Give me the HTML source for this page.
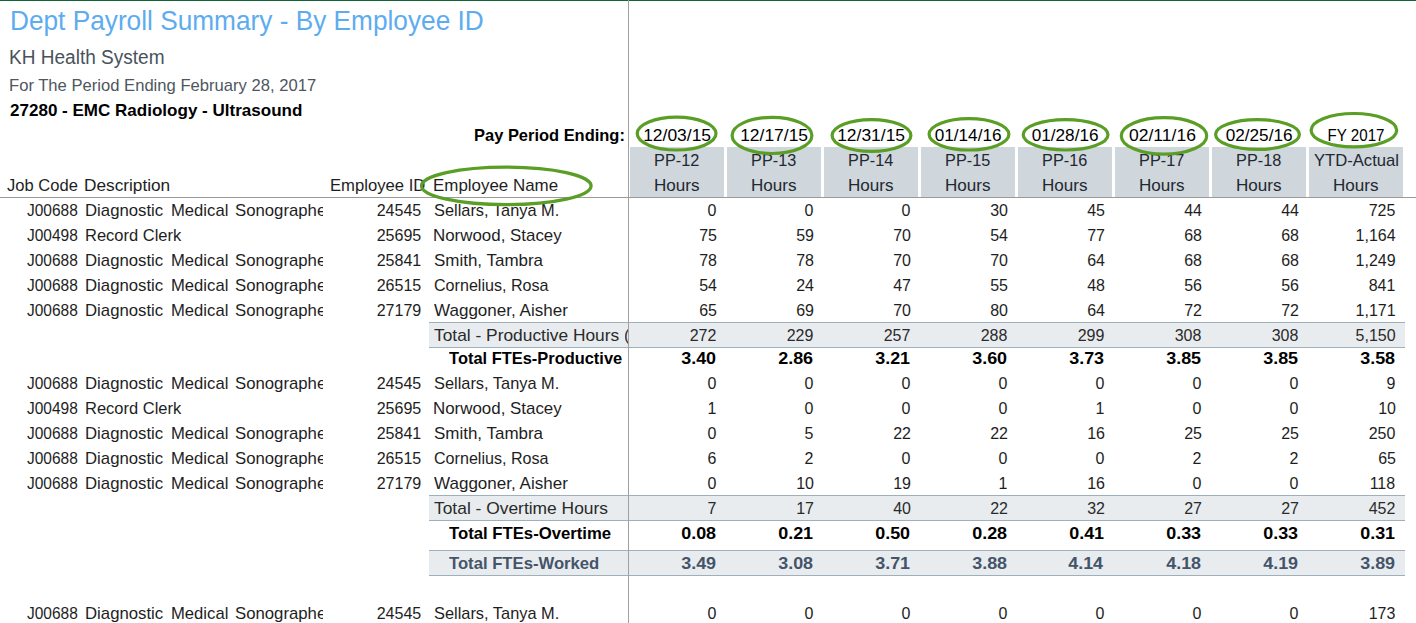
<!DOCTYPE html>
<html><head><meta charset="utf-8"><style>
html,body{margin:0;padding:0;background:#fff;}
body{width:1416px;height:623px;position:relative;overflow:hidden;font-family:"Liberation Sans",sans-serif;}
.t{position:absolute;white-space:nowrap;line-height:1;}
.s{display:inline-block;}
.b{position:absolute;}
</style></head><body>

<div class="b" style="left:0;top:0;width:1416px;height:1px;background:#0f6535"></div>
<div class="b" style="left:630px;top:147px;width:94px;height:50px;background:#cfd6dc"></div>
<div class="b" style="left:727px;top:147px;width:94px;height:50px;background:#cfd6dc"></div>
<div class="b" style="left:824px;top:147px;width:94px;height:50px;background:#cfd6dc"></div>
<div class="b" style="left:921px;top:147px;width:94px;height:50px;background:#cfd6dc"></div>
<div class="b" style="left:1018px;top:147px;width:94px;height:50px;background:#cfd6dc"></div>
<div class="b" style="left:1115px;top:147px;width:94px;height:50px;background:#cfd6dc"></div>
<div class="b" style="left:1212px;top:147px;width:94px;height:50px;background:#cfd6dc"></div>
<div class="b" style="left:1309px;top:147px;width:94px;height:50px;background:#cfd6dc"></div>
<div class="b" style="left:0;top:197px;width:1416px;height:1px;background:#9a9a9a"></div>
<div class="b" style="left:429px;top:322px;width:976px;height:24px;background:#e8ecef;border-top:1px solid #9fb0bd;border-bottom:1px solid #9fb0bd"></div>
<div class="b" style="left:429px;top:495px;width:976px;height:24px;background:#e8ecef;border-top:1px solid #9fb0bd;border-bottom:1px solid #9fb0bd"></div>
<div class="b" style="left:429px;top:550px;width:976px;height:24px;background:#e8ecef;border-top:1px solid #9fb0bd;border-bottom:1px solid #9fb0bd"></div>
<div class="t" style="top:6.72px;font-size:27.5px;color:#5eacf0;left:10.09px;"><span class="s" style="transform:scaleX(0.9538);transform-origin:left">Dept Payroll Summary - By Employee ID</span></div>
<div class="t" style="top:47.27px;font-size:20px;color:#48525c;left:9.05px;"><span class="s" style="transform:scaleX(0.9522);transform-origin:left">KH Health System</span></div>
<div class="t" style="top:76.91px;font-size:17px;color:#4e565e;left:9.02px;"><span class="s" style="transform:scaleX(0.9769);transform-origin:left">For The Period Ending February 28, 2017</span></div>
<div class="t" style="top:102.01px;font-size:17px;color:#000;font-weight:700;left:10.00px;"><span class="s" style="transform:scaleX(1.0017);transform-origin:left">27280 - EMC Radiology - Ultrasound</span></div>
<div class="t" style="top:126.61px;font-size:17px;color:#000;font-weight:700;left:468.78px;width:155.86px;"><span class="s" style="transform:scaleX(0.9676);transform-origin:right">Pay Period Ending:</span></div>
<div class="t" style="top:177.21px;font-size:17px;color:#1e1e1e;left:7.00px;"><span class="s" style="transform:scaleX(0.9735);transform-origin:left">Job Code</span></div>
<div class="t" style="top:177.21px;font-size:17px;color:#1e1e1e;left:84.49px;"><span class="s" style="transform:scaleX(1.0134);transform-origin:left">Description</span></div>
<div class="t" style="top:176.61px;font-size:17px;color:#1e1e1e;left:327.95px;width:97.32px;"><span class="s" style="transform:scaleX(0.9798);transform-origin:right">Employee ID</span></div>
<div class="t" style="top:176.61px;font-size:17px;color:#1e1e1e;left:432.70px;"><span class="s" style="transform:scaleX(0.9951);transform-origin:left">Employee Name</span></div>
<div class="t" style="top:126.61px;font-size:17px;color:#000;left:643.64px;"><span class="s" style="transform:scaleX(1.0260);transform-origin:33.36px 50%">12/03/15</span></div>
<div class="t" style="top:152.11px;font-size:17px;color:#222831;left:653.10px;"><span class="s" style="transform:scaleX(0.9565);transform-origin:23.90px 50%">PP-12</span></div>
<div class="t" style="top:177.01px;font-size:17px;color:#222831;left:654.08px;"><span class="s" style="transform:scaleX(1.0035);transform-origin:22.92px 50%">Hours</span></div>
<div class="t" style="top:126.61px;font-size:17px;color:#000;left:740.64px;"><span class="s" style="transform:scaleX(1.0260);transform-origin:33.36px 50%">12/17/15</span></div>
<div class="t" style="top:152.11px;font-size:17px;color:#222831;left:750.10px;"><span class="s" style="transform:scaleX(0.9565);transform-origin:23.90px 50%">PP-13</span></div>
<div class="t" style="top:177.01px;font-size:17px;color:#222831;left:751.08px;"><span class="s" style="transform:scaleX(1.0035);transform-origin:22.92px 50%">Hours</span></div>
<div class="t" style="top:126.61px;font-size:17px;color:#000;left:837.64px;"><span class="s" style="transform:scaleX(1.0260);transform-origin:33.36px 50%">12/31/15</span></div>
<div class="t" style="top:152.11px;font-size:17px;color:#222831;left:847.10px;"><span class="s" style="transform:scaleX(0.9565);transform-origin:23.90px 50%">PP-14</span></div>
<div class="t" style="top:177.01px;font-size:17px;color:#222831;left:848.08px;"><span class="s" style="transform:scaleX(1.0035);transform-origin:22.92px 50%">Hours</span></div>
<div class="t" style="top:126.61px;font-size:17px;color:#000;left:935.14px;"><span class="s" style="transform:scaleX(1.0104);transform-origin:32.86px 50%">01/14/16</span></div>
<div class="t" style="top:152.11px;font-size:17px;color:#222831;left:944.10px;"><span class="s" style="transform:scaleX(0.9565);transform-origin:23.90px 50%">PP-15</span></div>
<div class="t" style="top:177.01px;font-size:17px;color:#222831;left:945.08px;"><span class="s" style="transform:scaleX(1.0035);transform-origin:22.92px 50%">Hours</span></div>
<div class="t" style="top:126.61px;font-size:17px;color:#000;left:1032.14px;"><span class="s" style="transform:scaleX(1.0104);transform-origin:32.86px 50%">01/28/16</span></div>
<div class="t" style="top:152.11px;font-size:17px;color:#222831;left:1041.10px;"><span class="s" style="transform:scaleX(0.9565);transform-origin:23.90px 50%">PP-16</span></div>
<div class="t" style="top:177.01px;font-size:17px;color:#222831;left:1042.08px;"><span class="s" style="transform:scaleX(1.0035);transform-origin:22.92px 50%">Hours</span></div>
<div class="t" style="top:126.61px;font-size:17px;color:#000;left:1129.77px;"><span class="s" style="transform:scaleX(1.0301);transform-origin:32.23px 50%">02/11/16</span></div>
<div class="t" style="top:152.11px;font-size:17px;color:#222831;left:1138.10px;"><span class="s" style="transform:scaleX(0.9565);transform-origin:23.90px 50%">PP-17</span></div>
<div class="t" style="top:177.01px;font-size:17px;color:#222831;left:1139.08px;"><span class="s" style="transform:scaleX(1.0035);transform-origin:22.92px 50%">Hours</span></div>
<div class="t" style="top:126.61px;font-size:17px;color:#000;left:1226.14px;"><span class="s" style="transform:scaleX(1.0104);transform-origin:32.86px 50%">02/25/16</span></div>
<div class="t" style="top:152.11px;font-size:17px;color:#222831;left:1235.10px;"><span class="s" style="transform:scaleX(0.9565);transform-origin:23.90px 50%">PP-18</span></div>
<div class="t" style="top:177.01px;font-size:17px;color:#222831;left:1236.08px;"><span class="s" style="transform:scaleX(1.0035);transform-origin:22.92px 50%">Hours</span></div>
<div class="t" style="top:126.61px;font-size:17px;color:#000;left:1323.59px;"><span class="s" style="transform:scaleX(0.8884);transform-origin:32.41px 50%">FY 2017</span></div>
<div class="t" style="top:152.11px;font-size:17px;color:#222831;left:1312.93px;"><span class="s" style="transform:scaleX(0.9787);transform-origin:43.07px 50%">YTD-Actual</span></div>
<div class="t" style="top:177.01px;font-size:17px;color:#222831;left:1333.08px;"><span class="s" style="transform:scaleX(1.0035);transform-origin:22.92px 50%">Hours</span></div>
<div class="t" style="top:201.61px;font-size:17px;color:#1e1e1e;left:27.00px;"><span class="s" style="transform:scaleX(0.9111);transform-origin:left">J00688</span></div>
<div class="t" style="top:201.61px;font-size:17px;color:#1e1e1e;left:85.21px;"><span class="s" style="transform:scaleX(0.9851);transform-origin:left">Diagnostic</span></div>
<div class="t" style="top:201.61px;font-size:17px;color:#1e1e1e;left:170.82px;"><span class="s" style="transform:scaleX(0.9788);transform-origin:left">Medical</span></div>
<div class="t" style="top:201.61px;font-size:17px;color:#1e1e1e;left:235px;width:88px;overflow:hidden;"><span class="s" style="margin-left:0.00px;transform:scaleX(0.9850);transform-origin:left">Sonographer</span></div>
<div class="t" style="top:201.61px;font-size:17px;color:#1e1e1e;left:373.56px;width:47.27px;"><span class="s" style="transform:scaleX(0.9441);transform-origin:right">24545</span></div>
<div class="t" style="top:201.61px;font-size:17px;color:#1e1e1e;left:433.60px;"><span class="s" style="transform:scaleX(0.9633);transform-origin:left">Sellars, Tanya M.</span></div>
<div class="t" style="top:201.61px;font-size:17px;color:#1e1e1e;left:706.97px;width:9.45px;"><span class="s" style="transform:scaleX(0.9400);transform-origin:right">0</span></div>
<div class="t" style="top:201.61px;font-size:17px;color:#1e1e1e;left:803.97px;width:9.45px;"><span class="s" style="transform:scaleX(0.9400);transform-origin:right">0</span></div>
<div class="t" style="top:201.61px;font-size:17px;color:#1e1e1e;left:900.97px;width:9.45px;"><span class="s" style="transform:scaleX(0.9400);transform-origin:right">0</span></div>
<div class="t" style="top:201.61px;font-size:17px;color:#1e1e1e;left:988.52px;width:18.91px;"><span class="s" style="transform:scaleX(0.9400);transform-origin:right">30</span></div>
<div class="t" style="top:201.61px;font-size:17px;color:#1e1e1e;left:1085.52px;width:18.91px;"><span class="s" style="transform:scaleX(0.9400);transform-origin:right">45</span></div>
<div class="t" style="top:201.61px;font-size:17px;color:#1e1e1e;left:1182.52px;width:18.91px;"><span class="s" style="transform:scaleX(0.9400);transform-origin:right">44</span></div>
<div class="t" style="top:201.61px;font-size:17px;color:#1e1e1e;left:1279.52px;width:18.91px;"><span class="s" style="transform:scaleX(0.9400);transform-origin:right">44</span></div>
<div class="t" style="top:201.61px;font-size:17px;color:#1e1e1e;left:1367.06px;width:28.36px;"><span class="s" style="transform:scaleX(0.9400);transform-origin:right">725</span></div>
<div class="t" style="top:226.61px;font-size:17px;color:#1e1e1e;left:27.00px;"><span class="s" style="transform:scaleX(0.9111);transform-origin:left">J00498</span></div>
<div class="t" style="top:226.61px;font-size:17px;color:#1e1e1e;left:84.73px;"><span class="s" style="transform:scaleX(0.9707);transform-origin:left">Record Clerk</span></div>
<div class="t" style="top:226.61px;font-size:17px;color:#1e1e1e;left:373.56px;width:47.27px;"><span class="s" style="transform:scaleX(0.9441);transform-origin:right">25695</span></div>
<div class="t" style="top:226.61px;font-size:17px;color:#1e1e1e;left:432.61px;"><span class="s" style="transform:scaleX(0.9942);transform-origin:left">Norwood, Stacey</span></div>
<div class="t" style="top:226.61px;font-size:17px;color:#1e1e1e;left:697.52px;width:18.91px;"><span class="s" style="transform:scaleX(0.9400);transform-origin:right">75</span></div>
<div class="t" style="top:226.61px;font-size:17px;color:#1e1e1e;left:794.52px;width:18.91px;"><span class="s" style="transform:scaleX(0.9400);transform-origin:right">59</span></div>
<div class="t" style="top:226.61px;font-size:17px;color:#1e1e1e;left:891.52px;width:18.91px;"><span class="s" style="transform:scaleX(0.9400);transform-origin:right">70</span></div>
<div class="t" style="top:226.61px;font-size:17px;color:#1e1e1e;left:988.52px;width:18.91px;"><span class="s" style="transform:scaleX(0.9400);transform-origin:right">54</span></div>
<div class="t" style="top:226.61px;font-size:17px;color:#1e1e1e;left:1085.52px;width:18.91px;"><span class="s" style="transform:scaleX(0.9400);transform-origin:right">77</span></div>
<div class="t" style="top:226.61px;font-size:17px;color:#1e1e1e;left:1182.52px;width:18.91px;"><span class="s" style="transform:scaleX(0.9400);transform-origin:right">68</span></div>
<div class="t" style="top:226.61px;font-size:17px;color:#1e1e1e;left:1279.52px;width:18.91px;"><span class="s" style="transform:scaleX(0.9400);transform-origin:right">68</span></div>
<div class="t" style="top:226.61px;font-size:17px;color:#1e1e1e;left:1352.89px;width:42.54px;"><span class="s" style="transform:scaleX(0.9400);transform-origin:right">1,164</span></div>
<div class="t" style="top:251.61px;font-size:17px;color:#1e1e1e;left:27.00px;"><span class="s" style="transform:scaleX(0.9111);transform-origin:left">J00688</span></div>
<div class="t" style="top:251.61px;font-size:17px;color:#1e1e1e;left:85.21px;"><span class="s" style="transform:scaleX(0.9851);transform-origin:left">Diagnostic</span></div>
<div class="t" style="top:251.61px;font-size:17px;color:#1e1e1e;left:170.82px;"><span class="s" style="transform:scaleX(0.9788);transform-origin:left">Medical</span></div>
<div class="t" style="top:251.61px;font-size:17px;color:#1e1e1e;left:235px;width:88px;overflow:hidden;"><span class="s" style="margin-left:0.00px;transform:scaleX(0.9850);transform-origin:left">Sonographer</span></div>
<div class="t" style="top:251.61px;font-size:17px;color:#1e1e1e;left:373.56px;width:47.27px;"><span class="s" style="transform:scaleX(0.9441);transform-origin:right">25841</span></div>
<div class="t" style="top:251.61px;font-size:17px;color:#1e1e1e;left:433.60px;"><span class="s" style="transform:scaleX(0.9979);transform-origin:left">Smith, Tambra</span></div>
<div class="t" style="top:251.61px;font-size:17px;color:#1e1e1e;left:697.52px;width:18.91px;"><span class="s" style="transform:scaleX(0.9400);transform-origin:right">78</span></div>
<div class="t" style="top:251.61px;font-size:17px;color:#1e1e1e;left:794.52px;width:18.91px;"><span class="s" style="transform:scaleX(0.9400);transform-origin:right">78</span></div>
<div class="t" style="top:251.61px;font-size:17px;color:#1e1e1e;left:891.52px;width:18.91px;"><span class="s" style="transform:scaleX(0.9400);transform-origin:right">70</span></div>
<div class="t" style="top:251.61px;font-size:17px;color:#1e1e1e;left:988.52px;width:18.91px;"><span class="s" style="transform:scaleX(0.9400);transform-origin:right">70</span></div>
<div class="t" style="top:251.61px;font-size:17px;color:#1e1e1e;left:1085.52px;width:18.91px;"><span class="s" style="transform:scaleX(0.9400);transform-origin:right">64</span></div>
<div class="t" style="top:251.61px;font-size:17px;color:#1e1e1e;left:1182.52px;width:18.91px;"><span class="s" style="transform:scaleX(0.9400);transform-origin:right">68</span></div>
<div class="t" style="top:251.61px;font-size:17px;color:#1e1e1e;left:1279.52px;width:18.91px;"><span class="s" style="transform:scaleX(0.9400);transform-origin:right">68</span></div>
<div class="t" style="top:251.61px;font-size:17px;color:#1e1e1e;left:1352.89px;width:42.54px;"><span class="s" style="transform:scaleX(0.9400);transform-origin:right">1,249</span></div>
<div class="t" style="top:276.61px;font-size:17px;color:#1e1e1e;left:27.00px;"><span class="s" style="transform:scaleX(0.9111);transform-origin:left">J00688</span></div>
<div class="t" style="top:276.61px;font-size:17px;color:#1e1e1e;left:85.21px;"><span class="s" style="transform:scaleX(0.9851);transform-origin:left">Diagnostic</span></div>
<div class="t" style="top:276.61px;font-size:17px;color:#1e1e1e;left:170.82px;"><span class="s" style="transform:scaleX(0.9788);transform-origin:left">Medical</span></div>
<div class="t" style="top:276.61px;font-size:17px;color:#1e1e1e;left:235px;width:88px;overflow:hidden;"><span class="s" style="margin-left:0.00px;transform:scaleX(0.9850);transform-origin:left">Sonographer</span></div>
<div class="t" style="top:276.61px;font-size:17px;color:#1e1e1e;left:373.56px;width:47.27px;"><span class="s" style="transform:scaleX(0.9441);transform-origin:right">26515</span></div>
<div class="t" style="top:276.61px;font-size:17px;color:#1e1e1e;left:433.60px;"><span class="s" style="transform:scaleX(0.9466);transform-origin:left">Cornelius, Rosa</span></div>
<div class="t" style="top:276.61px;font-size:17px;color:#1e1e1e;left:697.52px;width:18.91px;"><span class="s" style="transform:scaleX(0.9400);transform-origin:right">54</span></div>
<div class="t" style="top:276.61px;font-size:17px;color:#1e1e1e;left:794.52px;width:18.91px;"><span class="s" style="transform:scaleX(0.9400);transform-origin:right">24</span></div>
<div class="t" style="top:276.61px;font-size:17px;color:#1e1e1e;left:891.52px;width:18.91px;"><span class="s" style="transform:scaleX(0.9400);transform-origin:right">47</span></div>
<div class="t" style="top:276.61px;font-size:17px;color:#1e1e1e;left:988.52px;width:18.91px;"><span class="s" style="transform:scaleX(0.9400);transform-origin:right">55</span></div>
<div class="t" style="top:276.61px;font-size:17px;color:#1e1e1e;left:1085.52px;width:18.91px;"><span class="s" style="transform:scaleX(0.9400);transform-origin:right">48</span></div>
<div class="t" style="top:276.61px;font-size:17px;color:#1e1e1e;left:1182.52px;width:18.91px;"><span class="s" style="transform:scaleX(0.9400);transform-origin:right">56</span></div>
<div class="t" style="top:276.61px;font-size:17px;color:#1e1e1e;left:1279.52px;width:18.91px;"><span class="s" style="transform:scaleX(0.9400);transform-origin:right">56</span></div>
<div class="t" style="top:276.61px;font-size:17px;color:#1e1e1e;left:1367.06px;width:28.36px;"><span class="s" style="transform:scaleX(0.9400);transform-origin:right">841</span></div>
<div class="t" style="top:301.61px;font-size:17px;color:#1e1e1e;left:27.00px;"><span class="s" style="transform:scaleX(0.9111);transform-origin:left">J00688</span></div>
<div class="t" style="top:301.61px;font-size:17px;color:#1e1e1e;left:85.21px;"><span class="s" style="transform:scaleX(0.9851);transform-origin:left">Diagnostic</span></div>
<div class="t" style="top:301.61px;font-size:17px;color:#1e1e1e;left:170.82px;"><span class="s" style="transform:scaleX(0.9788);transform-origin:left">Medical</span></div>
<div class="t" style="top:301.61px;font-size:17px;color:#1e1e1e;left:235px;width:88px;overflow:hidden;"><span class="s" style="margin-left:0.00px;transform:scaleX(0.9850);transform-origin:left">Sonographer</span></div>
<div class="t" style="top:301.61px;font-size:17px;color:#1e1e1e;left:373.56px;width:47.27px;"><span class="s" style="transform:scaleX(0.9441);transform-origin:right">27179</span></div>
<div class="t" style="top:301.61px;font-size:17px;color:#1e1e1e;left:433.60px;"><span class="s" style="transform:scaleX(1.0020);transform-origin:left">Waggoner, Aisher</span></div>
<div class="t" style="top:301.61px;font-size:17px;color:#1e1e1e;left:697.52px;width:18.91px;"><span class="s" style="transform:scaleX(0.9400);transform-origin:right">65</span></div>
<div class="t" style="top:301.61px;font-size:17px;color:#1e1e1e;left:794.52px;width:18.91px;"><span class="s" style="transform:scaleX(0.9400);transform-origin:right">69</span></div>
<div class="t" style="top:301.61px;font-size:17px;color:#1e1e1e;left:891.52px;width:18.91px;"><span class="s" style="transform:scaleX(0.9400);transform-origin:right">70</span></div>
<div class="t" style="top:301.61px;font-size:17px;color:#1e1e1e;left:988.52px;width:18.91px;"><span class="s" style="transform:scaleX(0.9400);transform-origin:right">80</span></div>
<div class="t" style="top:301.61px;font-size:17px;color:#1e1e1e;left:1085.52px;width:18.91px;"><span class="s" style="transform:scaleX(0.9400);transform-origin:right">64</span></div>
<div class="t" style="top:301.61px;font-size:17px;color:#1e1e1e;left:1182.52px;width:18.91px;"><span class="s" style="transform:scaleX(0.9400);transform-origin:right">72</span></div>
<div class="t" style="top:301.61px;font-size:17px;color:#1e1e1e;left:1279.52px;width:18.91px;"><span class="s" style="transform:scaleX(0.9400);transform-origin:right">72</span></div>
<div class="t" style="top:301.61px;font-size:17px;color:#1e1e1e;left:1352.89px;width:42.54px;"><span class="s" style="transform:scaleX(0.9400);transform-origin:right">1,171</span></div>
<div class="t" style="top:326.91px;font-size:17px;color:#2a2a2a;left:433.70px;"><span class="s" style="transform:scaleX(1.0210);transform-origin:left">Total - Productive Hours</span></div>
<div class="t" style="top:326.91px;font-size:17px;color:#2a2a2a;left:624.7px;width:3.2999999999999545px;overflow:hidden;"><span class="s" style="margin-left:-0.97px;transform:scaleX(0.9700);transform-origin:left">(R</span></div>
<div class="t" style="top:326.91px;font-size:17px;color:#2a2a2a;left:688.06px;width:28.36px;"><span class="s" style="transform:scaleX(0.9400);transform-origin:right">272</span></div>
<div class="t" style="top:326.91px;font-size:17px;color:#2a2a2a;left:785.06px;width:28.36px;"><span class="s" style="transform:scaleX(0.9400);transform-origin:right">229</span></div>
<div class="t" style="top:326.91px;font-size:17px;color:#2a2a2a;left:882.06px;width:28.36px;"><span class="s" style="transform:scaleX(0.9400);transform-origin:right">257</span></div>
<div class="t" style="top:326.91px;font-size:17px;color:#2a2a2a;left:979.06px;width:28.36px;"><span class="s" style="transform:scaleX(0.9400);transform-origin:right">288</span></div>
<div class="t" style="top:326.91px;font-size:17px;color:#2a2a2a;left:1076.06px;width:28.36px;"><span class="s" style="transform:scaleX(0.9400);transform-origin:right">299</span></div>
<div class="t" style="top:326.91px;font-size:17px;color:#2a2a2a;left:1173.06px;width:28.36px;"><span class="s" style="transform:scaleX(0.9400);transform-origin:right">308</span></div>
<div class="t" style="top:326.91px;font-size:17px;color:#2a2a2a;left:1270.06px;width:28.36px;"><span class="s" style="transform:scaleX(0.9400);transform-origin:right">308</span></div>
<div class="t" style="top:326.91px;font-size:17px;color:#2a2a2a;left:1352.89px;width:42.54px;"><span class="s" style="transform:scaleX(0.9400);transform-origin:right">5,150</span></div>
<div class="t" style="top:349.71px;font-size:17px;color:#000;font-weight:700;left:443.19px;width:179.15px;"><span class="s" style="transform:scaleX(0.9659);transform-origin:right">Total FTEs-Productive</span></div>
<div class="t" style="top:349.71px;font-size:17px;color:#000;font-weight:700;left:683.39px;width:33.09px;"><span class="s" style="transform:scaleX(1.0550);transform-origin:right">3.40</span></div>
<div class="t" style="top:349.71px;font-size:17px;color:#000;font-weight:700;left:780.39px;width:33.09px;"><span class="s" style="transform:scaleX(1.0550);transform-origin:right">2.86</span></div>
<div class="t" style="top:349.71px;font-size:17px;color:#000;font-weight:700;left:877.39px;width:33.09px;"><span class="s" style="transform:scaleX(1.0550);transform-origin:right">3.21</span></div>
<div class="t" style="top:349.71px;font-size:17px;color:#000;font-weight:700;left:974.39px;width:33.09px;"><span class="s" style="transform:scaleX(1.0550);transform-origin:right">3.60</span></div>
<div class="t" style="top:349.71px;font-size:17px;color:#000;font-weight:700;left:1071.39px;width:33.09px;"><span class="s" style="transform:scaleX(1.0550);transform-origin:right">3.73</span></div>
<div class="t" style="top:349.71px;font-size:17px;color:#000;font-weight:700;left:1168.39px;width:33.09px;"><span class="s" style="transform:scaleX(1.0550);transform-origin:right">3.85</span></div>
<div class="t" style="top:349.71px;font-size:17px;color:#000;font-weight:700;left:1265.39px;width:33.09px;"><span class="s" style="transform:scaleX(1.0550);transform-origin:right">3.85</span></div>
<div class="t" style="top:349.71px;font-size:17px;color:#000;font-weight:700;left:1362.39px;width:33.09px;"><span class="s" style="transform:scaleX(1.0550);transform-origin:right">3.58</span></div>
<div class="t" style="top:374.61px;font-size:17px;color:#1e1e1e;left:27.00px;"><span class="s" style="transform:scaleX(0.9111);transform-origin:left">J00688</span></div>
<div class="t" style="top:374.61px;font-size:17px;color:#1e1e1e;left:85.21px;"><span class="s" style="transform:scaleX(0.9851);transform-origin:left">Diagnostic</span></div>
<div class="t" style="top:374.61px;font-size:17px;color:#1e1e1e;left:170.82px;"><span class="s" style="transform:scaleX(0.9788);transform-origin:left">Medical</span></div>
<div class="t" style="top:374.61px;font-size:17px;color:#1e1e1e;left:235px;width:88px;overflow:hidden;"><span class="s" style="margin-left:0.00px;transform:scaleX(0.9850);transform-origin:left">Sonographer</span></div>
<div class="t" style="top:374.61px;font-size:17px;color:#1e1e1e;left:373.56px;width:47.27px;"><span class="s" style="transform:scaleX(0.9441);transform-origin:right">24545</span></div>
<div class="t" style="top:374.61px;font-size:17px;color:#1e1e1e;left:433.60px;"><span class="s" style="transform:scaleX(0.9633);transform-origin:left">Sellars, Tanya M.</span></div>
<div class="t" style="top:374.61px;font-size:17px;color:#1e1e1e;left:706.97px;width:9.45px;"><span class="s" style="transform:scaleX(0.9400);transform-origin:right">0</span></div>
<div class="t" style="top:374.61px;font-size:17px;color:#1e1e1e;left:803.97px;width:9.45px;"><span class="s" style="transform:scaleX(0.9400);transform-origin:right">0</span></div>
<div class="t" style="top:374.61px;font-size:17px;color:#1e1e1e;left:900.97px;width:9.45px;"><span class="s" style="transform:scaleX(0.9400);transform-origin:right">0</span></div>
<div class="t" style="top:374.61px;font-size:17px;color:#1e1e1e;left:997.97px;width:9.45px;"><span class="s" style="transform:scaleX(0.9400);transform-origin:right">0</span></div>
<div class="t" style="top:374.61px;font-size:17px;color:#1e1e1e;left:1094.97px;width:9.45px;"><span class="s" style="transform:scaleX(0.9400);transform-origin:right">0</span></div>
<div class="t" style="top:374.61px;font-size:17px;color:#1e1e1e;left:1191.97px;width:9.45px;"><span class="s" style="transform:scaleX(0.9400);transform-origin:right">0</span></div>
<div class="t" style="top:374.61px;font-size:17px;color:#1e1e1e;left:1288.97px;width:9.45px;"><span class="s" style="transform:scaleX(0.9400);transform-origin:right">0</span></div>
<div class="t" style="top:374.61px;font-size:17px;color:#1e1e1e;left:1385.97px;width:9.45px;"><span class="s" style="transform:scaleX(0.9400);transform-origin:right">9</span></div>
<div class="t" style="top:399.61px;font-size:17px;color:#1e1e1e;left:27.00px;"><span class="s" style="transform:scaleX(0.9111);transform-origin:left">J00498</span></div>
<div class="t" style="top:399.61px;font-size:17px;color:#1e1e1e;left:84.73px;"><span class="s" style="transform:scaleX(0.9707);transform-origin:left">Record Clerk</span></div>
<div class="t" style="top:399.61px;font-size:17px;color:#1e1e1e;left:373.56px;width:47.27px;"><span class="s" style="transform:scaleX(0.9441);transform-origin:right">25695</span></div>
<div class="t" style="top:399.61px;font-size:17px;color:#1e1e1e;left:432.61px;"><span class="s" style="transform:scaleX(0.9942);transform-origin:left">Norwood, Stacey</span></div>
<div class="t" style="top:399.61px;font-size:17px;color:#1e1e1e;left:706.97px;width:9.45px;"><span class="s" style="transform:scaleX(0.9400);transform-origin:right">1</span></div>
<div class="t" style="top:399.61px;font-size:17px;color:#1e1e1e;left:803.97px;width:9.45px;"><span class="s" style="transform:scaleX(0.9400);transform-origin:right">0</span></div>
<div class="t" style="top:399.61px;font-size:17px;color:#1e1e1e;left:900.97px;width:9.45px;"><span class="s" style="transform:scaleX(0.9400);transform-origin:right">0</span></div>
<div class="t" style="top:399.61px;font-size:17px;color:#1e1e1e;left:997.97px;width:9.45px;"><span class="s" style="transform:scaleX(0.9400);transform-origin:right">0</span></div>
<div class="t" style="top:399.61px;font-size:17px;color:#1e1e1e;left:1094.97px;width:9.45px;"><span class="s" style="transform:scaleX(0.9400);transform-origin:right">1</span></div>
<div class="t" style="top:399.61px;font-size:17px;color:#1e1e1e;left:1191.97px;width:9.45px;"><span class="s" style="transform:scaleX(0.9400);transform-origin:right">0</span></div>
<div class="t" style="top:399.61px;font-size:17px;color:#1e1e1e;left:1288.97px;width:9.45px;"><span class="s" style="transform:scaleX(0.9400);transform-origin:right">0</span></div>
<div class="t" style="top:399.61px;font-size:17px;color:#1e1e1e;left:1376.52px;width:18.91px;"><span class="s" style="transform:scaleX(0.9400);transform-origin:right">10</span></div>
<div class="t" style="top:424.61px;font-size:17px;color:#1e1e1e;left:27.00px;"><span class="s" style="transform:scaleX(0.9111);transform-origin:left">J00688</span></div>
<div class="t" style="top:424.61px;font-size:17px;color:#1e1e1e;left:85.21px;"><span class="s" style="transform:scaleX(0.9851);transform-origin:left">Diagnostic</span></div>
<div class="t" style="top:424.61px;font-size:17px;color:#1e1e1e;left:170.82px;"><span class="s" style="transform:scaleX(0.9788);transform-origin:left">Medical</span></div>
<div class="t" style="top:424.61px;font-size:17px;color:#1e1e1e;left:235px;width:88px;overflow:hidden;"><span class="s" style="margin-left:0.00px;transform:scaleX(0.9850);transform-origin:left">Sonographer</span></div>
<div class="t" style="top:424.61px;font-size:17px;color:#1e1e1e;left:373.56px;width:47.27px;"><span class="s" style="transform:scaleX(0.9441);transform-origin:right">25841</span></div>
<div class="t" style="top:424.61px;font-size:17px;color:#1e1e1e;left:433.60px;"><span class="s" style="transform:scaleX(0.9979);transform-origin:left">Smith, Tambra</span></div>
<div class="t" style="top:424.61px;font-size:17px;color:#1e1e1e;left:706.97px;width:9.45px;"><span class="s" style="transform:scaleX(0.9400);transform-origin:right">0</span></div>
<div class="t" style="top:424.61px;font-size:17px;color:#1e1e1e;left:803.97px;width:9.45px;"><span class="s" style="transform:scaleX(0.9400);transform-origin:right">5</span></div>
<div class="t" style="top:424.61px;font-size:17px;color:#1e1e1e;left:891.52px;width:18.91px;"><span class="s" style="transform:scaleX(0.9400);transform-origin:right">22</span></div>
<div class="t" style="top:424.61px;font-size:17px;color:#1e1e1e;left:988.52px;width:18.91px;"><span class="s" style="transform:scaleX(0.9400);transform-origin:right">22</span></div>
<div class="t" style="top:424.61px;font-size:17px;color:#1e1e1e;left:1085.52px;width:18.91px;"><span class="s" style="transform:scaleX(0.9400);transform-origin:right">16</span></div>
<div class="t" style="top:424.61px;font-size:17px;color:#1e1e1e;left:1182.52px;width:18.91px;"><span class="s" style="transform:scaleX(0.9400);transform-origin:right">25</span></div>
<div class="t" style="top:424.61px;font-size:17px;color:#1e1e1e;left:1279.52px;width:18.91px;"><span class="s" style="transform:scaleX(0.9400);transform-origin:right">25</span></div>
<div class="t" style="top:424.61px;font-size:17px;color:#1e1e1e;left:1367.06px;width:28.36px;"><span class="s" style="transform:scaleX(0.9400);transform-origin:right">250</span></div>
<div class="t" style="top:449.61px;font-size:17px;color:#1e1e1e;left:27.00px;"><span class="s" style="transform:scaleX(0.9111);transform-origin:left">J00688</span></div>
<div class="t" style="top:449.61px;font-size:17px;color:#1e1e1e;left:85.21px;"><span class="s" style="transform:scaleX(0.9851);transform-origin:left">Diagnostic</span></div>
<div class="t" style="top:449.61px;font-size:17px;color:#1e1e1e;left:170.82px;"><span class="s" style="transform:scaleX(0.9788);transform-origin:left">Medical</span></div>
<div class="t" style="top:449.61px;font-size:17px;color:#1e1e1e;left:235px;width:88px;overflow:hidden;"><span class="s" style="margin-left:0.00px;transform:scaleX(0.9850);transform-origin:left">Sonographer</span></div>
<div class="t" style="top:449.61px;font-size:17px;color:#1e1e1e;left:373.56px;width:47.27px;"><span class="s" style="transform:scaleX(0.9441);transform-origin:right">26515</span></div>
<div class="t" style="top:449.61px;font-size:17px;color:#1e1e1e;left:433.60px;"><span class="s" style="transform:scaleX(0.9466);transform-origin:left">Cornelius, Rosa</span></div>
<div class="t" style="top:449.61px;font-size:17px;color:#1e1e1e;left:706.97px;width:9.45px;"><span class="s" style="transform:scaleX(0.9400);transform-origin:right">6</span></div>
<div class="t" style="top:449.61px;font-size:17px;color:#1e1e1e;left:803.97px;width:9.45px;"><span class="s" style="transform:scaleX(0.9400);transform-origin:right">2</span></div>
<div class="t" style="top:449.61px;font-size:17px;color:#1e1e1e;left:900.97px;width:9.45px;"><span class="s" style="transform:scaleX(0.9400);transform-origin:right">0</span></div>
<div class="t" style="top:449.61px;font-size:17px;color:#1e1e1e;left:997.97px;width:9.45px;"><span class="s" style="transform:scaleX(0.9400);transform-origin:right">0</span></div>
<div class="t" style="top:449.61px;font-size:17px;color:#1e1e1e;left:1094.97px;width:9.45px;"><span class="s" style="transform:scaleX(0.9400);transform-origin:right">0</span></div>
<div class="t" style="top:449.61px;font-size:17px;color:#1e1e1e;left:1191.97px;width:9.45px;"><span class="s" style="transform:scaleX(0.9400);transform-origin:right">2</span></div>
<div class="t" style="top:449.61px;font-size:17px;color:#1e1e1e;left:1288.97px;width:9.45px;"><span class="s" style="transform:scaleX(0.9400);transform-origin:right">2</span></div>
<div class="t" style="top:449.61px;font-size:17px;color:#1e1e1e;left:1376.52px;width:18.91px;"><span class="s" style="transform:scaleX(0.9400);transform-origin:right">65</span></div>
<div class="t" style="top:474.61px;font-size:17px;color:#1e1e1e;left:27.00px;"><span class="s" style="transform:scaleX(0.9111);transform-origin:left">J00688</span></div>
<div class="t" style="top:474.61px;font-size:17px;color:#1e1e1e;left:85.21px;"><span class="s" style="transform:scaleX(0.9851);transform-origin:left">Diagnostic</span></div>
<div class="t" style="top:474.61px;font-size:17px;color:#1e1e1e;left:170.82px;"><span class="s" style="transform:scaleX(0.9788);transform-origin:left">Medical</span></div>
<div class="t" style="top:474.61px;font-size:17px;color:#1e1e1e;left:235px;width:88px;overflow:hidden;"><span class="s" style="margin-left:0.00px;transform:scaleX(0.9850);transform-origin:left">Sonographer</span></div>
<div class="t" style="top:474.61px;font-size:17px;color:#1e1e1e;left:373.56px;width:47.27px;"><span class="s" style="transform:scaleX(0.9441);transform-origin:right">27179</span></div>
<div class="t" style="top:474.61px;font-size:17px;color:#1e1e1e;left:433.60px;"><span class="s" style="transform:scaleX(1.0020);transform-origin:left">Waggoner, Aisher</span></div>
<div class="t" style="top:474.61px;font-size:17px;color:#1e1e1e;left:706.97px;width:9.45px;"><span class="s" style="transform:scaleX(0.9400);transform-origin:right">0</span></div>
<div class="t" style="top:474.61px;font-size:17px;color:#1e1e1e;left:794.52px;width:18.91px;"><span class="s" style="transform:scaleX(0.9400);transform-origin:right">10</span></div>
<div class="t" style="top:474.61px;font-size:17px;color:#1e1e1e;left:891.52px;width:18.91px;"><span class="s" style="transform:scaleX(0.9400);transform-origin:right">19</span></div>
<div class="t" style="top:474.61px;font-size:17px;color:#1e1e1e;left:997.97px;width:9.45px;"><span class="s" style="transform:scaleX(0.9400);transform-origin:right">1</span></div>
<div class="t" style="top:474.61px;font-size:17px;color:#1e1e1e;left:1085.52px;width:18.91px;"><span class="s" style="transform:scaleX(0.9400);transform-origin:right">16</span></div>
<div class="t" style="top:474.61px;font-size:17px;color:#1e1e1e;left:1191.97px;width:9.45px;"><span class="s" style="transform:scaleX(0.9400);transform-origin:right">0</span></div>
<div class="t" style="top:474.61px;font-size:17px;color:#1e1e1e;left:1288.97px;width:9.45px;"><span class="s" style="transform:scaleX(0.9400);transform-origin:right">0</span></div>
<div class="t" style="top:474.61px;font-size:17px;color:#1e1e1e;left:1368.33px;width:27.10px;"><span class="s" style="transform:scaleX(0.9400);transform-origin:right">118</span></div>
<div class="t" style="top:499.81px;font-size:17px;color:#2a2a2a;left:433.80px;"><span class="s" style="transform:scaleX(1.0233);transform-origin:left">Total - Overtime Hours</span></div>
<div class="t" style="top:499.81px;font-size:17px;color:#2a2a2a;left:706.97px;width:9.45px;"><span class="s" style="transform:scaleX(0.9400);transform-origin:right">7</span></div>
<div class="t" style="top:499.81px;font-size:17px;color:#2a2a2a;left:794.52px;width:18.91px;"><span class="s" style="transform:scaleX(0.9400);transform-origin:right">17</span></div>
<div class="t" style="top:499.81px;font-size:17px;color:#2a2a2a;left:891.52px;width:18.91px;"><span class="s" style="transform:scaleX(0.9400);transform-origin:right">40</span></div>
<div class="t" style="top:499.81px;font-size:17px;color:#2a2a2a;left:988.52px;width:18.91px;"><span class="s" style="transform:scaleX(0.9400);transform-origin:right">22</span></div>
<div class="t" style="top:499.81px;font-size:17px;color:#2a2a2a;left:1085.52px;width:18.91px;"><span class="s" style="transform:scaleX(0.9400);transform-origin:right">32</span></div>
<div class="t" style="top:499.81px;font-size:17px;color:#2a2a2a;left:1182.52px;width:18.91px;"><span class="s" style="transform:scaleX(0.9400);transform-origin:right">27</span></div>
<div class="t" style="top:499.81px;font-size:17px;color:#2a2a2a;left:1279.52px;width:18.91px;"><span class="s" style="transform:scaleX(0.9400);transform-origin:right">27</span></div>
<div class="t" style="top:499.81px;font-size:17px;color:#2a2a2a;left:1367.06px;width:28.36px;"><span class="s" style="transform:scaleX(0.9400);transform-origin:right">452</span></div>
<div class="t" style="top:525.11px;font-size:17px;color:#000;font-weight:700;left:449.30px;"><span class="s" style="transform:scaleX(0.9827);transform-origin:left">Total FTEs-Overtime</span></div>
<div class="t" style="top:525.11px;font-size:17px;color:#000;font-weight:700;left:683.39px;width:33.09px;"><span class="s" style="transform:scaleX(1.0550);transform-origin:right">0.08</span></div>
<div class="t" style="top:525.11px;font-size:17px;color:#000;font-weight:700;left:780.39px;width:33.09px;"><span class="s" style="transform:scaleX(1.0550);transform-origin:right">0.21</span></div>
<div class="t" style="top:525.11px;font-size:17px;color:#000;font-weight:700;left:877.39px;width:33.09px;"><span class="s" style="transform:scaleX(1.0550);transform-origin:right">0.50</span></div>
<div class="t" style="top:525.11px;font-size:17px;color:#000;font-weight:700;left:974.39px;width:33.09px;"><span class="s" style="transform:scaleX(1.0550);transform-origin:right">0.28</span></div>
<div class="t" style="top:525.11px;font-size:17px;color:#000;font-weight:700;left:1071.39px;width:33.09px;"><span class="s" style="transform:scaleX(1.0550);transform-origin:right">0.41</span></div>
<div class="t" style="top:525.11px;font-size:17px;color:#000;font-weight:700;left:1168.39px;width:33.09px;"><span class="s" style="transform:scaleX(1.0550);transform-origin:right">0.33</span></div>
<div class="t" style="top:525.11px;font-size:17px;color:#000;font-weight:700;left:1265.39px;width:33.09px;"><span class="s" style="transform:scaleX(1.0550);transform-origin:right">0.33</span></div>
<div class="t" style="top:525.11px;font-size:17px;color:#000;font-weight:700;left:1362.39px;width:33.09px;"><span class="s" style="transform:scaleX(1.0550);transform-origin:right">0.31</span></div>
<div class="t" style="top:555.11px;font-size:17px;color:#44546a;font-weight:700;left:449.30px;"><span class="s" style="transform:scaleX(0.9801);transform-origin:left">Total FTEs-Worked</span></div>
<div class="t" style="top:555.11px;font-size:17px;color:#44546a;font-weight:700;left:683.39px;width:33.09px;"><span class="s" style="transform:scaleX(1.0550);transform-origin:right">3.49</span></div>
<div class="t" style="top:555.11px;font-size:17px;color:#44546a;font-weight:700;left:780.39px;width:33.09px;"><span class="s" style="transform:scaleX(1.0550);transform-origin:right">3.08</span></div>
<div class="t" style="top:555.11px;font-size:17px;color:#44546a;font-weight:700;left:877.39px;width:33.09px;"><span class="s" style="transform:scaleX(1.0550);transform-origin:right">3.71</span></div>
<div class="t" style="top:555.11px;font-size:17px;color:#44546a;font-weight:700;left:974.39px;width:33.09px;"><span class="s" style="transform:scaleX(1.0550);transform-origin:right">3.88</span></div>
<div class="t" style="top:555.11px;font-size:17px;color:#44546a;font-weight:700;left:1070.34px;width:33.09px;"><span class="s" style="transform:scaleX(1.0550);transform-origin:right">4.14</span></div>
<div class="t" style="top:555.11px;font-size:17px;color:#44546a;font-weight:700;left:1168.39px;width:33.09px;"><span class="s" style="transform:scaleX(1.0550);transform-origin:right">4.18</span></div>
<div class="t" style="top:555.11px;font-size:17px;color:#44546a;font-weight:700;left:1265.39px;width:33.09px;"><span class="s" style="transform:scaleX(1.0550);transform-origin:right">4.19</span></div>
<div class="t" style="top:555.11px;font-size:17px;color:#44546a;font-weight:700;left:1362.39px;width:33.09px;"><span class="s" style="transform:scaleX(1.0550);transform-origin:right">3.89</span></div>
<div class="t" style="top:605.01px;font-size:17px;color:#1e1e1e;left:27.00px;"><span class="s" style="transform:scaleX(0.9111);transform-origin:left">J00688</span></div>
<div class="t" style="top:605.01px;font-size:17px;color:#1e1e1e;left:85.21px;"><span class="s" style="transform:scaleX(0.9851);transform-origin:left">Diagnostic</span></div>
<div class="t" style="top:605.01px;font-size:17px;color:#1e1e1e;left:170.82px;"><span class="s" style="transform:scaleX(0.9788);transform-origin:left">Medical</span></div>
<div class="t" style="top:605.01px;font-size:17px;color:#1e1e1e;left:235px;width:88px;overflow:hidden;"><span class="s" style="margin-left:0.00px;transform:scaleX(0.9850);transform-origin:left">Sonographer</span></div>
<div class="t" style="top:605.01px;font-size:17px;color:#1e1e1e;left:373.56px;width:47.27px;"><span class="s" style="transform:scaleX(0.9441);transform-origin:right">24545</span></div>
<div class="t" style="top:605.01px;font-size:17px;color:#1e1e1e;left:433.60px;"><span class="s" style="transform:scaleX(0.9633);transform-origin:left">Sellars, Tanya M.</span></div>
<div class="t" style="top:605.01px;font-size:17px;color:#1e1e1e;left:706.97px;width:9.45px;"><span class="s" style="transform:scaleX(0.9400);transform-origin:right">0</span></div>
<div class="t" style="top:605.01px;font-size:17px;color:#1e1e1e;left:803.97px;width:9.45px;"><span class="s" style="transform:scaleX(0.9400);transform-origin:right">0</span></div>
<div class="t" style="top:605.01px;font-size:17px;color:#1e1e1e;left:900.97px;width:9.45px;"><span class="s" style="transform:scaleX(0.9400);transform-origin:right">0</span></div>
<div class="t" style="top:605.01px;font-size:17px;color:#1e1e1e;left:997.97px;width:9.45px;"><span class="s" style="transform:scaleX(0.9400);transform-origin:right">0</span></div>
<div class="t" style="top:605.01px;font-size:17px;color:#1e1e1e;left:1094.97px;width:9.45px;"><span class="s" style="transform:scaleX(0.9400);transform-origin:right">0</span></div>
<div class="t" style="top:605.01px;font-size:17px;color:#1e1e1e;left:1191.97px;width:9.45px;"><span class="s" style="transform:scaleX(0.9400);transform-origin:right">0</span></div>
<div class="t" style="top:605.01px;font-size:17px;color:#1e1e1e;left:1288.97px;width:9.45px;"><span class="s" style="transform:scaleX(0.9400);transform-origin:right">0</span></div>
<div class="t" style="top:605.01px;font-size:17px;color:#1e1e1e;left:1367.06px;width:28.36px;"><span class="s" style="transform:scaleX(0.9400);transform-origin:right">173</span></div>
<div class="b" style="left:628px;top:0;width:1px;height:623px;background:#a0a0a0"></div>
<svg class="b" style="left:0;top:0" width="1416" height="623"><ellipse cx="506.3" cy="185.9" rx="84.80" ry="18.75" fill="none" stroke="#5a9e25" stroke-width="3.2"/><ellipse cx="676.6" cy="133.6" rx="39.40" ry="16.40" fill="none" stroke="#5a9e25" stroke-width="3.2"/><ellipse cx="772" cy="135.4" rx="39.90" ry="18.10" fill="none" stroke="#5a9e25" stroke-width="3.2"/><ellipse cx="871.5" cy="135.5" rx="39.40" ry="15.90" fill="none" stroke="#5a9e25" stroke-width="3.2"/><ellipse cx="969" cy="134.3" rx="39.90" ry="15.70" fill="none" stroke="#5a9e25" stroke-width="3.2"/><ellipse cx="1065.6" cy="134.8" rx="42.40" ry="15.20" fill="none" stroke="#5a9e25" stroke-width="3.2"/><ellipse cx="1164" cy="135.9" rx="42.70" ry="18.30" fill="none" stroke="#5a9e25" stroke-width="3.2"/><ellipse cx="1257.5" cy="134.5" rx="41.90" ry="14.90" fill="none" stroke="#5a9e25" stroke-width="3.2"/><ellipse cx="1353.9" cy="130.2" rx="42.80" ry="16.70" fill="none" stroke="#5a9e25" stroke-width="3.2"/></svg>
</body></html>
